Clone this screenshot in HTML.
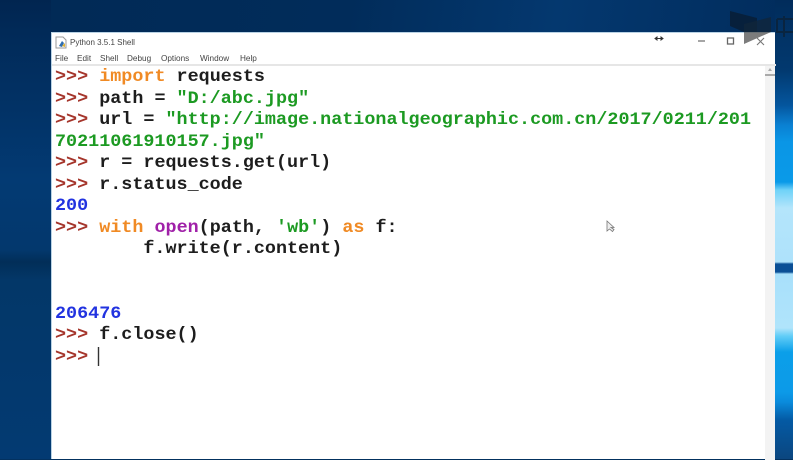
<!DOCTYPE html>
<html><head><meta charset="utf-8"><style>
html,body{margin:0;padding:0;width:793px;height:459px;overflow:hidden;background:#03315f}
#bg{position:absolute;left:0;top:0;width:793px;height:459px;background:linear-gradient(180deg,#012550 0,#012a58 32px,#033a73 180px,#03386d 250px,#022e58 262px,#033768 280px,#033a72 459px)}
#top{position:absolute;left:51px;top:0;width:742px;height:32px;background:linear-gradient(100deg,#012a56 0,#012c5a 40%,#04386f 68%,#012c5c 100%)}
#right{position:absolute;left:775px;top:0;width:18px;height:459px;background:linear-gradient(180deg,#012c5b 0,#02396f 70px,#04559d 105px,#0a80d2 125px,#0a96e6 142px,#0a9ae8 182px,#6fd2f8 190px,#b4e5fb 208px,#aee2fb 262px,#0a4f96 264px,#0a4f96 272px,#a8e0fb 274px,#b0e4fb 328px,#62cdf7 336px,#0b9fe9 352px,#0c9ae8 392px,#0a8bdc 402px,#045aa4 420px,#0b467f 459px)}
#win{position:absolute;left:51px;top:32px;width:724px;height:427px;background:#fff;border-top:1px solid #b9d2e4;border-left:1px solid #b9d2e4;box-sizing:border-box;font-family:"Liberation Sans",sans-serif;color:#333}
.sb{position:absolute;left:713px;top:33px;width:10px;height:394px;background:#f3f3f3}
.sep{position:absolute;left:0;top:31px;width:724px;height:2px;background:#e6e6e6}
.ttl{position:absolute;left:18px;top:4px;font-size:8px;line-height:11px;color:#444}
.m{position:absolute;top:20px;font-size:8.2px;line-height:11px;color:#444;white-space:pre}
pre{position:absolute;left:55px;top:67px;margin:0;font:bold 17.5px/21.5px "Liberation Mono",monospace;color:#1d1d1d;z-index:2;transform:scaleX(1.052);transform-origin:0 0;filter:blur(.25px)}
.p{color:#a5352b}.k{color:#f08a24}.s{color:#1c9a22}.b{color:#2233e0}.v{color:#a020a8}
svg{position:absolute;left:0;top:0;z-index:3}
</style></head><body>
<div id="bg"></div><div id="top"></div><div id="right"></div>
<div id="win">
<div class="ttl">Python 3.5.1 Shell</div>
<span class="m" style="left:3px">File</span><span class="m" style="left:25px">Edit</span><span class="m" style="left:48px">Shell</span><span class="m" style="left:75px">Debug</span><span class="m" style="left:109px">Options</span><span class="m" style="left:148px">Window</span><span class="m" style="left:188px">Help</span>
<div class="sep"></div><div class="sb"></div>
</div>
<pre><span class="p">&gt;&gt;&gt;</span> <span class="k">import</span> requests
<span class="p">&gt;&gt;&gt;</span> path = <span class="s">"D:/abc.jpg"</span>
<span class="p">&gt;&gt;&gt;</span> url = <span class="s">"http://image.nationalgeographic.com.cn/2017/0211/201
70211061910157.jpg"</span>
<span class="p">&gt;&gt;&gt;</span> r = requests.get(url)
<span class="p">&gt;&gt;&gt;</span> r.status_code
<span class="b">200</span>
<span class="p">&gt;&gt;&gt;</span> <span class="k">with</span> <span class="v">open</span>(path, <span class="s">'wb'</span>) <span class="k">as</span> f:
        f.write(r.content)


<span class="b">206476</span>
<span class="p">&gt;&gt;&gt;</span> f.close()
<span class="p">&gt;&gt;&gt;</span> </pre>
<svg width="793" height="459" viewBox="0 0 793 459">
<path d="M56 37h7l3 3v8H56z" fill="#fff" stroke="#999" stroke-width="1"/>
<path d="M59 46l3-5 2 2-2 4z" fill="#2f6db0"/><path d="M62 46l3-3v4z" fill="#e0b030"/>
<path d="M655 38.500h8M655 38.500l2-1.500v3zM663 38.500l-2-1.500v3z" fill="#333" stroke="#333" stroke-width="1"/>
<path d="M698 41h7" stroke="#777" stroke-width="1.300"/>
<rect x="727.500" y="38" width="6" height="6" fill="none" stroke="#666" stroke-width="1.300"/>
<path d="M757 38l7 7M764 38l-7 7" stroke="#777" stroke-width="1.100"/>
<path d="M730 11l27 7v14h-13l-14-6z" fill="#0a1c30" fill-opacity=".75"/>
<path d="M744 24l27-7v15h-27z" fill="#12263a" fill-opacity=".75"/>
<path d="M744 32h27l-27 12z" fill="#444" fill-opacity=".7"/>
<path d="M777 19h16M784 16v21M777 19v13h16" fill="none" stroke="#0b2238" stroke-width="2" stroke-opacity=".8"/>
<path d="M765 75h10" stroke="#aaa" stroke-width="2"/>
<path d="M768 71l2-3 2 3z" fill="#aaa"/>
<path d="M98.500 347v19" stroke="#333" stroke-width="1.400"/>
<path d="M607 221v10l2.500-2 3 2.500 1.500-2-3-2h3z" fill="#eee" stroke="#777" stroke-width=".8"/>
</svg>
</body></html>
